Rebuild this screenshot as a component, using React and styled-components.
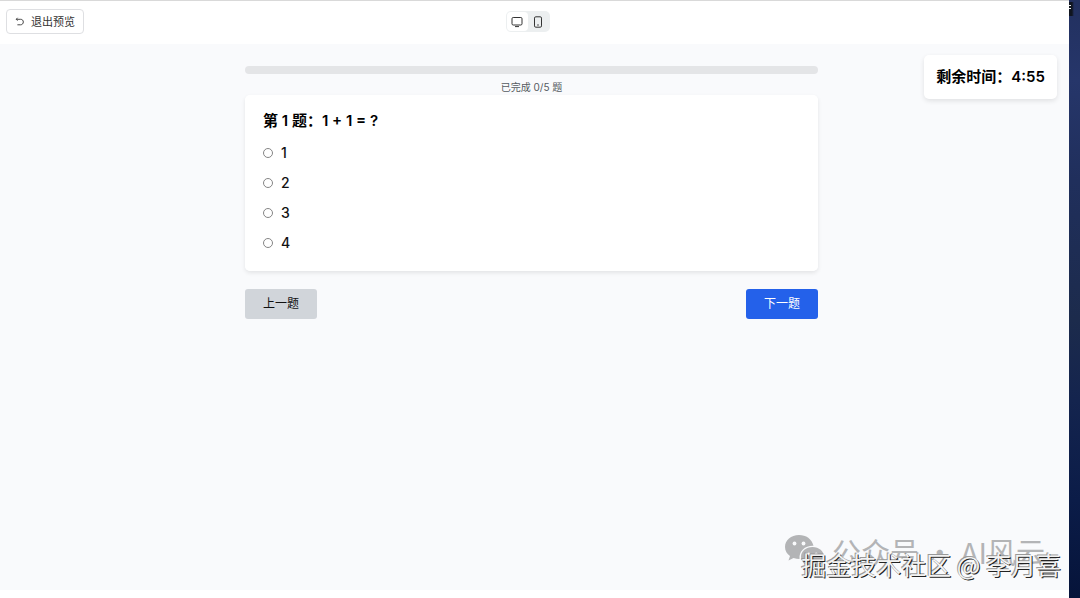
import React, { useState } from 'react';
import styled, { createGlobalStyle } from 'styled-components';

const GlobalStyle = createGlobalStyle`
  * {
    box-sizing: border-box;
  }

  body {
    margin: 0;
    color: #000;
    background: #fff;
    font-family: Inter, "Noto Sans CJK SC", sans-serif;
  }

  button {
    font-family: inherit;
    cursor: pointer;
  }
`;

const Screen = styled.div`
  position: relative;
  display: flex;
  min-height: 100vh;
  overflow: hidden;
`;

const Window = styled.div`
  flex: 1;
  display: flex;
  flex-direction: column;
  padding-bottom: 8px;
  border-top: 1px solid #d9d9d9;
  background: #fff;
`;

const Desktop = styled.div`
  width: 11px;
  background:
    linear-gradient(#e8e8ea, #e8e8ea) 0 5px / 2px 1px no-repeat,
    linear-gradient(#e8e8ea, #e8e8ea) 0 8px / 2px 1px no-repeat,
    linear-gradient(90deg, #10151f 3px, transparent) 0 2px / 5px 14px no-repeat,
    linear-gradient(#22305f 0, #26366a 80px, #202f5c 180px, #1c2b4c 320px, #14244e 400px, #0b1c48 500px, #06143a 100%);
`;

const Header = styled.header`
  display: grid;
  grid-template-columns: 1fr auto 1fr;
  align-items: center;
  height: 43px;
  padding: 0 20px 2px 6px;
`;

const ExitButton = styled.button`
  justify-self: start;
  display: flex;
  align-items: center;
  gap: 6px;
  height: 25px;
  padding: 0 8px;
  border: 1px solid #dedfe2;
  border-radius: 4px;
  background: #fff;
  color: #333;
  font-size: 11px;
  line-height: 16px;
`;

const DeviceSwitch = styled.div`
  display: flex;
  padding: 1px;
  border-radius: 5px;
  background: #eceff0;
`;

const DeviceButton = styled.button`
  display: flex;
  align-items: center;
  justify-content: center;
  width: 21px;
  height: 19px;
  padding: 0;
  border: none;
  border-radius: 4px;
  color: #333;
  background: ${({ $active }) => ($active ? '#fff' : 'transparent')};
`;

const Main = styled.main`
  flex: 1;
  position: relative;
  padding: 22px 6px 22px 0;
  background: #f9fafc;
`;

const Timer = styled.div`
  position: absolute;
  top: 11px;
  right: 12px;
  padding: 10px 12px;
  border-radius: 5px;
  background: #fff;
  box-shadow: 0 2px 5px rgba(0, 0, 0, 0.1);
  font-size: 15px;
  font-weight: 600;
  line-height: 24px;
`;

const Quiz = styled.div`
  width: 53.9%;
  min-width: 320px;
  margin: 0 auto;
`;

const Progress = styled.div`
  height: 8px;
  border-radius: 4px;
  overflow: hidden;
  background: #e4e5e7;
`;

const ProgressBar = styled.div`
  height: 100%;
  background: #2563eb;
`;

const ProgressText = styled.p`
  margin: 5px 0 0;
  color: #555a61;
  font-size: 10px;
  line-height: 16px;
  text-align: center;
`;

const Card = styled.fieldset`
  margin: 0 0 18px;
  padding: 17px 18px 16px;
  border: none;
  border-radius: 5px;
  background: #fff;
  box-shadow: 0 2px 4px rgba(0, 0, 0, 0.09);
`;

const Question = styled.legend`
  float: left;
  width: 100%;
  margin-bottom: 11px;
  padding: 0;
  font-size: 15px;
  font-weight: 600;
  line-height: 18px;
`;

const Options = styled.div`
  clear: both;
  display: flex;
  flex-direction: column;
  gap: 6px;
`;

const Option = styled.label`
  display: flex;
  align-items: center;
  gap: 8px;
  font-size: 14px;
  font-weight: 500;
  line-height: 24px;
  color: #111;
`;

const Radio = styled.input`
  appearance: none;
  width: 10px;
  height: 10px;
  margin: 0;
  border: 1px solid #858585;
  border-radius: 50%;
  background: #fff;

  &:checked {
    border: 3px solid #2563eb;
  }
`;

const Actions = styled.div`
  display: flex;
  justify-content: space-between;
`;

const ActionButton = styled.button`
  height: 30px;
  padding: 0 18px;
  border: none;
  border-radius: 3px;
  color: ${({ $primary }) => ($primary ? '#fff' : '#111')};
  background: ${({ $primary }) => ($primary ? '#2461ea' : '#d1d5da')};
  font-size: 12px;
  line-height: 18px;
`;

const AccountMark = styled.div`
  position: absolute;
  right: 35px;
  bottom: 27px;
  display: flex;
  align-items: center;
  gap: 8px;
  color: #b3b4b6;
  font-family: "Noto Sans CJK SC", sans-serif;
  font-size: 29px;
  line-height: 40px;
  white-space: nowrap;
`;

const CommunityMark = styled.div`
  position: absolute;
  right: 19px;
  bottom: 16px;
  color: #f2f2f2;
  font-family: "Noto Sans CJK SC", sans-serif;
  font-size: 25px;
  line-height: 36px;
  text-shadow: 1px 1px 0 #222, -1px -1px 0 #999;
  white-space: nowrap;
`;

const UndoIcon = () => (
  <svg width="10" height="10" viewBox="0 0 10 10" fill="none" stroke="currentColor" strokeWidth="0.9" aria-hidden="true">
    <path d="M2.600 0.800 1.200 2.300 2.600 3.600M1.400 2.300H5.600C7.400 2.300 8.300 3.500 8.300 5S7.300 7.800 5.600 7.800H2.400" />
  </svg>
);

const MonitorIcon = () => (
  <svg width="12" height="12" viewBox="0 0 12 12" fill="none" stroke="currentColor" aria-hidden="true">
    <rect x="1" y="1.5" width="10" height="7.5" rx="1.2" />
    <path d="M4 10.6h4" />
  </svg>
);

const PhoneIcon = () => (
  <svg width="12" height="12" viewBox="0 0 12 12" fill="none" stroke="currentColor" aria-hidden="true">
    <rect x="2.5" y="0.8" width="7" height="10.4" rx="1.3" />
    <path d="M5.2 9h1.6" />
  </svg>
);

const WechatIcon = () => (
  <svg width="40" height="34" viewBox="0 0 40 34" aria-hidden="true">
    <path
      fill="#b3b4b6"
      d="M15 1C7 1 1 6.300 1 13c0 4 2 7 5 9l-1.500 4.500 5-2.500c2 .6 4 .9 6 .9C15 17 21 11.500 29.500 11.800 28 5 22 1 15 1Z"
    />
    <path
      fill="#b3b4b6"
      d="M28.500 13C22 13 17 17.400 17 22.800S22 32.500 28.500 32.500c1.500 0 3-.2 4.300-.7l4 2-1-3.300C38.500 28.600 40 26 40 22.800 40 17.400 35 13 28.500 13Z"
    />
    <circle cx="10.500" cy="9.500" r="1.900" fill="#f9fafc" />
    <circle cx="19.500" cy="9.500" r="1.900" fill="#f9fafc" />
    <circle cx="24.800" cy="20" r="1.500" fill="#f9fafc" />
    <circle cx="32.200" cy="20" r="1.500" fill="#f9fafc" />
  </svg>
);

const total = 5;
const options = ['1', '2', '3', '4'];

function App() {
  const [device, setDevice] = useState('desktop');
  const [answer, setAnswer] = useState(null);
  const done = answer ? 1 : 0;

  return (
    <Screen>
      <GlobalStyle />
      <Window>
        <Header>
          <ExitButton type="button">
            <UndoIcon />
            退出预览
          </ExitButton>
          <DeviceSwitch>
            <DeviceButton
              type="button"
              aria-label="Desktop"
              $active={device === 'desktop'}
              onClick={() => setDevice('desktop')}
            >
              <MonitorIcon />
            </DeviceButton>
            <DeviceButton
              type="button"
              aria-label="Mobile"
              $active={device === 'mobile'}
              onClick={() => setDevice('mobile')}
            >
              <PhoneIcon />
            </DeviceButton>
          </DeviceSwitch>
        </Header>

        <Main>
          <Timer>剩余时间：4:55</Timer>
          <Quiz>
            <Progress>
              <ProgressBar style={{ width: `${(done / total) * 100}%` }} />
            </Progress>
            <ProgressText>已完成 {done}/{total} 题</ProgressText>

            <Card>
              <Question>第 1 题：1 + 1 = ?</Question>
              <Options>
                {options.map((option) => (
                  <Option key={option} htmlFor={`option-${option}`}>
                    <Radio
                      type="radio"
                      id={`option-${option}`}
                      name="answer"
                      value={option}
                      checked={answer === option}
                      onChange={() => setAnswer(option)}
                    />
                    {option}
                  </Option>
                ))}
              </Options>
            </Card>

            <Actions>
              <ActionButton type="button">上一题</ActionButton>
              <ActionButton type="button" $primary>下一题</ActionButton>
            </Actions>
          </Quiz>
        </Main>
      </Window>
      <Desktop />

      <AccountMark>
        <WechatIcon />
        公众号 · AI风云
      </AccountMark>
      <CommunityMark>掘金技术社区 @ 李月喜</CommunityMark>
    </Screen>
  );
}

export default App;
